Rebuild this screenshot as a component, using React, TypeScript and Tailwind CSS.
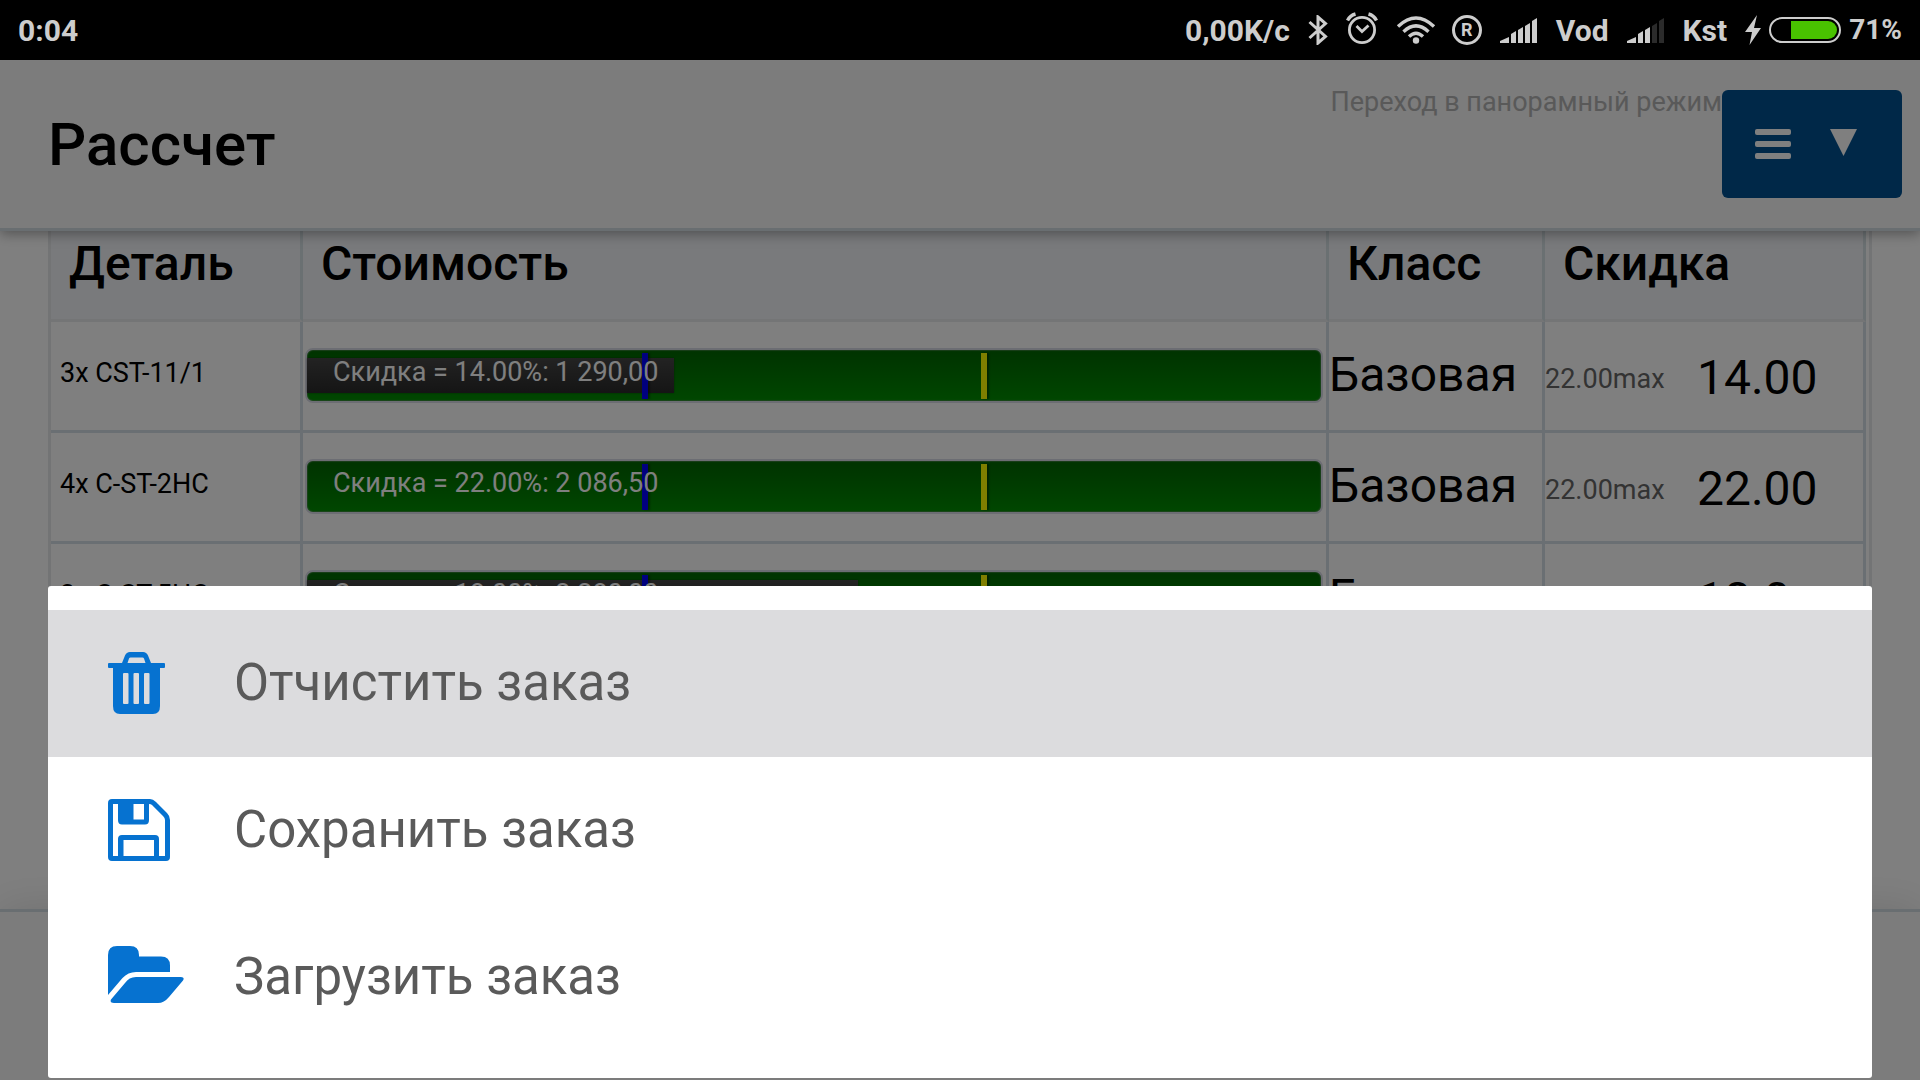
import React from "react";

type Row = {
  detail: string;
  label: string;
  fill: number;
  cls: string;
  max: string;
  discount: string;
};

const rows: Row[] = [
  { detail: "3x CST-11/1", label: "Скидка = 14.00%: 1 290,00", fill: 36.2, cls: "Базовая", max: "22.00max", discount: "14.00" },
  { detail: "4x C-ST-2HC", label: "Скидка = 22.00%: 2 086,50", fill: 0, cls: "Базовая", max: "22.00max", discount: "22.00" },
  { detail: "3x C-ST-5HC", label: "Скидка = 18.00%: 2 280,00", fill: 54.3, cls: "Базовая", max: "22.00max", discount: "18.0" },
];

function SignalIcon({ level, className }: { level: number; className: string }) {
  const bars = [
    "M0 25V23L9 19V25Z",
    "M11 25V16L16 13V25Z",
    "M18 25V12L23 9V25Z",
    "M25 25V8L30 5V25Z",
    "M32 25V3L37 0V25Z",
  ];
  return (
    <svg className={className} width="38" height="25" viewBox="0 0 38 25" aria-hidden="true">
      {bars.map((d, i) => (
        <path key={d} d={d} fill={i < level ? "#cdcdcd" : "#2b2b2b"} />
      ))}
    </svg>
  );
}

function BluetoothIcon() {
  return (
    <svg width="20" height="30" viewBox="0 0 20 30" fill="none" stroke="#cdcdcd" strokeWidth="3" aria-hidden="true">
      <path d="M1.5 7 17.5 21.5 10 28V2L17.5 8.5 1.5 23" />
    </svg>
  );
}

function AlarmIcon() {
  return (
    <svg width="32" height="32" viewBox="0 0 32 32" fill="none" stroke="#cdcdcd" strokeWidth="2.8" aria-hidden="true">
      <circle cx="16" cy="18" r="12.6" />
      <path d="M10.5 14 16 19.5 22.5 13.5" />
      <path d="M1.5 8.5Q4 3.5 9.5 2M30.5 8.5Q28 3.5 22.5 2" strokeWidth="3.4" />
    </svg>
  );
}

function WifiIcon() {
  return (
    <svg width="40" height="28" viewBox="0 0 40 28" fill="none" stroke="#cdcdcd" strokeWidth="3.4" aria-hidden="true">
      <path d="M2 10.500Q20-6.500 38 10.500" />
      <path d="M7.500 15.700Q20 4 32.500 15.700" />
      <path d="M13 20.500Q20 14 27 20.500" />
      <circle cx="20" cy="24.500" r="3.200" fill="#cdcdcd" stroke="none" />
    </svg>
  );
}

function BatteryIcon() {
  return (
    <svg width="72" height="26" viewBox="0 0 72 26" aria-hidden="true">
      <rect x="1" y="1" width="70" height="24" rx="12" fill="none" stroke="#cdcdcd" strokeWidth="2" />
      <path d="M22 4H59A9 9 0 0 1 59 22H22Z" fill="#49c200" />
    </svg>
  );
}

function TrashIcon() {
  return (
    <svg width="57" height="62" viewBox="0 0 57 62" fill="#0672d0" aria-hidden="true">
      <path
        fillRule="evenodd"
        d="M14 11 17 3.500Q18.500 0 22 0H35Q38.500 0 40 3.500L43 11H56Q57 11 57 12V15Q57 16 56 16H52V54Q52 62 45 62H12Q5 62 5 54V16H1Q0 16 0 15V12Q0 11 1 11ZM19.500 11H37.500L36 6.500Q35.500 5.500 34.500 5.500H22.500Q21.500 5.500 21 6.500ZM16 21Q15 21 15 22V51Q15 52 16 52H19.500Q20.500 52 20.500 51V22Q20.500 21 19.500 21ZM26.500 21Q25.500 21 25.500 22V51Q25.500 52 26.500 52H30Q31 52 31 51V22Q31 21 30 21ZM37 21Q36 21 36 22V51Q36 52 37 52H40.500Q41.500 52 41.500 51V22Q41.500 21 40.500 21Z"
      />
    </svg>
  );
}

function SaveIcon() {
  return (
    <svg width="62" height="62" viewBox="0 0 62 62" fill="#0672d0" aria-hidden="true">
      <path
        fillRule="evenodd"
        d="M4 0H42Q45 0 48 3L59 14Q62 17 62 21V58Q62 62 58 62H4Q0 62 0 58V4Q0 0 4 0ZM5 5V57H10V40Q10 36 14 36H47Q51 36 51 40V57H57V21Q57 19 55 17L44 6Q43 5 41 5V21Q41 25.500 37 25.500H14Q10 25.500 10 21V5ZM25.500 5V20.500H36V5ZM15.500 41V57H46V41Z"
      />
    </svg>
  );
}

function FolderIcon() {
  return (
    <svg width="76" height="62" viewBox="0 0 76 62" fill="#0672d0" aria-hidden="true">
      <path d="M0 49V9Q0 0 9 0H22Q31 0 31 9V10.500H53Q62 10.500 62 19.500V26H28Q20 26 14.500 32Z" />
      <path d="M28 31H73Q77 31 75 34.500L61 51Q56 57 50 57H6Q1.500 57 3 53.500L17 37Q21 31 28 31Z" />
    </svg>
  );
}

function StatusBar() {
  return (
    <div className="flex h-[60px] shrink-0 items-center justify-between bg-black px-[18px] text-[30px] leading-[60px] font-bold text-[#cdcdcd]">
      <span className="pt-0.5">0:04</span>
      <div className="flex items-center">
        <span className="mr-[18px] pt-0.5">0,00K/c</span>
        <BluetoothIcon />
        <span className="mb-1 ml-[18px]">
          <AlarmIcon />
        </span>
        <span className="ml-[18px]">
          <WifiIcon />
        </span>
        <span className="ml-4 flex size-[30px] items-center justify-center rounded-full border-[3px] border-[#cdcdcd] text-[18px] leading-none font-bold">
          R
        </span>
        <SignalIcon level={5} className="ml-[18px]" />
        <span className="ml-[18px] pt-0.5">Vod</span>
        <SignalIcon level={3} className="ml-[18px]" />
        <span className="ml-[18px] pt-0.5">Kst</span>
        <svg className="ml-[18px]" width="16" height="30" viewBox="0 0 16 30" fill="#cdcdcd" aria-hidden="true">
          <path d="M12 0 0 17H7L4.500 30 16 13H9Z" />
        </svg>
        <span className="mr-2 ml-2">
          <BatteryIcon />
        </span>
        <span className="text-[28px]">71%</span>
      </div>
    </div>
  );
}

function PriceBar({ row }: { row: Row }) {
  return (
    <div className="relative mr-[3px] mb-0.5 ml-0.5 h-[55px] rounded-lg border-2 border-[#d9dbe6] bg-linear-to-b from-[#006600] to-[#008e00] shadow-[inset_0_0_1px_1px_rgba(90,140,90,0.6)]">
      {row.fill > 0 && (
        <div
          className="absolute top-2 left-0 h-[35px] bg-linear-to-b from-[#464646] to-[#2a2a2a] shadow-[0_0_2px_rgba(0,0,0,0.4)]"
          style={{ width: `${row.fill}%` }}
        />
      )}
      <span className="absolute top-[3px] left-[33%] h-[46px] w-1.5 bg-[#0000ff] shadow-[2px_0_2px_rgba(0,0,0,0.4)]" />
      <span className="absolute top-[3px] left-[66.5%] h-[46px] w-1.5 bg-[#ffff00] shadow-[2px_0_2px_rgba(0,0,0,0.4)]" />
      <span className="relative block pl-[26px] text-[27px] leading-[44px] text-white">{row.label}</span>
    </div>
  );
}

const headCell =
  "h-[91px] border-r-[3px] border-b-[3px] border-r-[#d5e0e4] border-b-[#e8eaec] bg-[#f2f4f8] px-[18px] pb-[22px] text-left text-[48px] leading-[56px] font-medium";
const cell = "h-[111px] border-r-[3px] border-b-[3px] border-[#d5dfe6] align-middle";

function PriceTable() {
  return (
    <div className="mx-12 border-r-[3px] border-l-[3px] border-[#e6e8ea] pr-[3px]">
      <table className="w-full table-fixed border-separate border-spacing-0">
        <colgroup>
          <col className="w-[252px]" />
          <col />
          <col className="w-[216px]" />
          <col className="w-[321px]" />
        </colgroup>
        <thead>
          <tr>
            <th className={headCell}>Деталь</th>
            <th className={headCell}>Стоимость</th>
            <th className={headCell}>Класс</th>
            <th className={headCell}>Скидка</th>
          </tr>
        </thead>
        <tbody>
          {rows.map((row) => (
            <tr key={row.detail}>
              <td className={`${cell} pb-1.5 pl-[9px] text-[27px]`}>{row.detail}</td>
              <td className={cell}>
                <PriceBar row={row} />
              </td>
              <td className={`${cell} pb-0.5 text-[48px] leading-[56px]`}>{row.cls}</td>
              <td className={cell}>
                <label className="flex items-center">
                  <span className="w-[152px] pt-1.5 text-[27px] text-[#666666]">{row.max}</span>
                  <input
                    type="text"
                    defaultValue={row.discount}
                    className="mt-1 h-14 w-[150px] bg-transparent text-[48px] leading-[56px] outline-none"
                  />
                </label>
              </td>
            </tr>
          ))}
        </tbody>
      </table>
    </div>
  );
}

const actions = [
  { label: "Отчистить заказ", icon: <TrashIcon />, active: true },
  { label: "Сохранить заказ", icon: <SaveIcon />, active: false },
  { label: "Загрузить заказ", icon: <FolderIcon />, active: false },
];

export default function App() {
  return (
    <div className="flex h-screen flex-col overflow-hidden bg-white font-[Roboto,sans-serif] text-black">
      <StatusBar />
      <div className="relative flex min-h-0 flex-1 flex-col">
        <header className="relative z-10 flex h-[171px] shrink-0 items-start border-b-[3px] border-[#d3dde3] bg-[#f8f8f8] pt-[30px] pr-[18px] pl-12 shadow-[0_3px_12px_rgba(0,0,0,0.35)]">
          <h1 className="flex-1 pt-5 text-[60px] leading-[70px] font-medium">Рассчет</h1>
          <span className="text-[27px] leading-6 text-[#b2b2b2]">Переход в панорамный режим</span>
          <button type="button" aria-label="Меню" className="flex h-[108px] w-[180px] items-center rounded-md bg-[#005090] pl-[33px]">
            <span className="flex flex-col gap-1.5">
              <span className="h-1.5 w-9 rounded-xs bg-white" />
              <span className="h-1.5 w-9 rounded-xs bg-white" />
              <span className="h-1.5 w-9 rounded-xs bg-white" />
            </span>
            <svg className="mb-1 ml-[39px]" width="27" height="27" viewBox="0 0 27 27" fill="#ffffff" aria-hidden="true">
              <path d="M0 0H27L13.500 27Z" />
            </svg>
          </button>
        </header>
        <main className="min-h-0 flex-1 overflow-hidden">
          <PriceTable />
        </main>
        <footer className="h-[171px] shrink-0 border-t-[3px] border-[#d3dde3] bg-[#f8f8f8] shadow-[0_0_40px_rgba(0,0,0,0.12)]" />

        <div className="absolute inset-0 z-20 bg-black/50" />
        <div role="menu" className="absolute inset-x-12 bottom-0.5 z-30 rounded-[3px] bg-white pt-6 pb-[27px]">
          {actions.map((a) => (
            <button
              key={a.label}
              type="button"
              role="menuitem"
              className={`flex h-[147px] w-full items-center pb-0.5 pl-[60px] text-left text-[51px] leading-[60px] text-[#5a5a5a] ${a.active ? "bg-[#dcdcde]" : "bg-white"}`}
            >
              <span className="w-[126px]">{a.icon}</span>
              {a.label}
            </button>
          ))}
        </div>
      </div>
    </div>
  );
}
